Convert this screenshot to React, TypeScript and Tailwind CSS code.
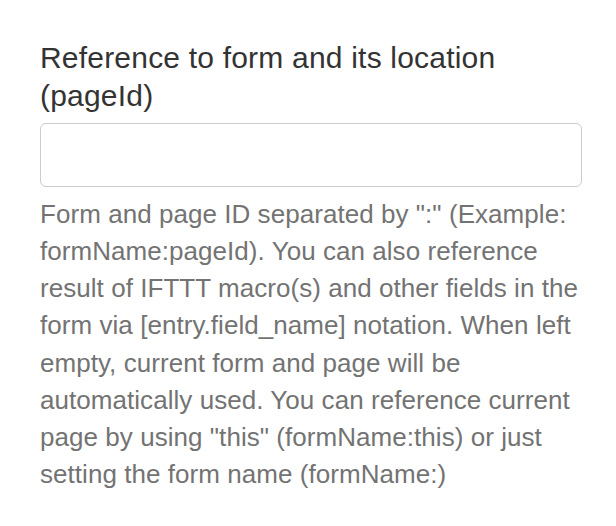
export default function App() {
  return (
    <div className="min-h-[526px] w-[616px] bg-white font-[family-name:'Liberation_Sans',Arial,sans-serif]">
      <div className="ml-[40px] w-[542px] pt-[39px]">
        {/* Field label */}
        <label className="block text-[30px] leading-[38px] tracking-[0.2px] text-[#333333]">
          Reference to form and its location (pageId)
        </label>

        {/* Input */}
        <input
          type="text"
          className="mt-[8px] block h-[64px] w-full rounded-[6px] border-[1.5px] border-[#cccccc] bg-white px-4 text-[26px] text-[#555555] focus:outline-none"
        />

        {/* Help text */}
        <p className="mt-[9px] text-[26px] leading-[37.14px] tracking-[0.05px] text-[#737373]">
          Form and page ID separated by ":" (Example: formName:pageId). You can
          also reference result of IFTTT macro(s) and other fields in the form
          via [entry.field_name] notation. When left empty, current form and
          page will be automatically used. You can reference current page by
          using "this" (formName:this) or just setting the form name
          (formName:)
        </p>
      </div>
    </div>
  );
}
